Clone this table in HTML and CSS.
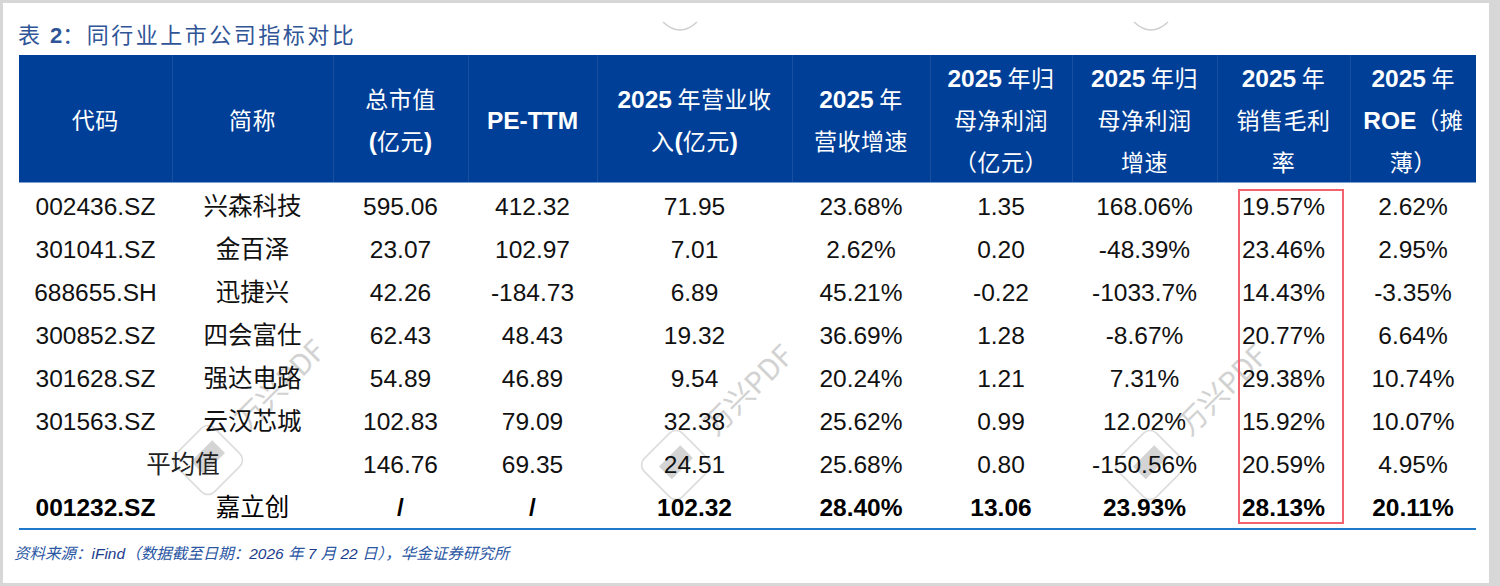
FILE: index.html
```html
<!DOCTYPE html>
<html lang="zh-CN">
<head>
<meta charset="utf-8">
<title>表 2：同行业上市公司指标对比</title>
<link rel="stylesheet" href="styles.css">
</head>
<body>
<div class="page">
  <svg class="wm" width="1486" height="580" viewBox="0 0 1486 580" aria-hidden="true">
    <path d="M660 19 Q677 35 694 19" class="arc"/>
    <path d="M1131 19 Q1148 35 1165 19" class="arc"/>
    <g transform="translate(205 457)">
      <rect x="-27" y="-27" width="54" height="54" rx="9" transform="rotate(45)" class="dia"/>
      <rect x="-9" y="-15" width="18" height="30" transform="rotate(45) translate(-2 -2)" class="blk"/>
      <text x="40" y="-28" transform="rotate(-45 40 -28)" class="wmt">万兴PDF</text>
    </g>
    <g transform="translate(673 462)">
      <rect x="-27" y="-27" width="54" height="54" rx="9" transform="rotate(45)" class="dia"/>
      <rect x="-9" y="-15" width="18" height="30" transform="rotate(45) translate(-2 -2)" class="blk"/>
      <text x="40" y="-28" transform="rotate(-45 40 -28)" class="wmt">万兴PDF</text>
    </g>
    <g transform="translate(1147 462)">
      <rect x="-27" y="-27" width="54" height="54" rx="9" transform="rotate(45)" class="dia"/>
      <rect x="-9" y="-15" width="18" height="30" transform="rotate(45) translate(-2 -2)" class="blk"/>
      <text x="40" y="-28" transform="rotate(-45 40 -28)" class="wmt">万兴PDF</text>
    </g>
  </svg>

  <h1 class="title">表 <span class="tnum">2</span>：同行业上市公司指标对比</h1>

  <div class="wrap">
    <table class="grid">
      <colgroup>
        <col style="width:153px"><col style="width:161px"><col style="width:135px"><col style="width:129px"><col style="width:195px">
        <col style="width:138px"><col style="width:142px"><col style="width:145px"><col style="width:133px"><col style="width:126px">
      </colgroup>
      <thead>
        <tr>
          <th>代码</th>
          <th>简称</th>
          <th>总市值<br><b>(</b>亿元<b>)</b></th>
          <th><b>PE-TTM</b></th>
          <th><b>2025</b> 年营业收<br>入<b>(</b>亿元<b>)</b></th>
          <th><b>2025</b> 年<br>营收增速</th>
          <th><b>2025</b> 年归<br>母净利润<br>（亿元）</th>
          <th><b>2025</b> 年归<br>母净利润<br>增速</th>
          <th><b>2025</b> 年<br>销售毛利<br>率</th>
          <th><b>2025</b> 年<br><b>ROE</b>（摊<br>薄）</th>
        </tr>
      </thead>
      <tbody>
        <tr><td>002436.SZ</td><td>兴森科技</td><td>595.06</td><td>412.32</td><td>71.95</td><td>23.68%</td><td>1.35</td><td>168.06%</td><td>19.57%</td><td>2.62%</td></tr>
        <tr><td>301041.SZ</td><td>金百泽</td><td>23.07</td><td>102.97</td><td>7.01</td><td>2.62%</td><td>0.20</td><td>-48.39%</td><td>23.46%</td><td>2.95%</td></tr>
        <tr><td>688655.SH</td><td>迅捷兴</td><td>42.26</td><td>-184.73</td><td>6.89</td><td>45.21%</td><td>-0.22</td><td>-1033.7%</td><td>14.43%</td><td>-3.35%</td></tr>
        <tr><td>300852.SZ</td><td>四会富仕</td><td>62.43</td><td>48.43</td><td>19.32</td><td>36.69%</td><td>1.28</td><td>-8.67%</td><td>20.77%</td><td>6.64%</td></tr>
        <tr><td>301628.SZ</td><td>强达电路</td><td>54.89</td><td>46.89</td><td>9.54</td><td>20.24%</td><td>1.21</td><td>7.31%</td><td>29.38%</td><td>10.74%</td></tr>
        <tr><td>301563.SZ</td><td>云汉芯城</td><td>102.83</td><td>79.09</td><td>32.38</td><td>25.62%</td><td>0.99</td><td>12.02%</td><td>15.92%</td><td>10.07%</td></tr>
        <tr><td colspan="2" class="avg">平均值</td><td>146.76</td><td>69.35</td><td>24.51</td><td>25.68%</td><td>0.80</td><td>-150.56%</td><td>20.59%</td><td>4.95%</td></tr>
        <tr class="self"><td>001232.SZ</td><td class="cn">嘉立创</td><td>/</td><td>/</td><td>102.32</td><td>28.40%</td><td>13.06</td><td>23.93%</td><td>28.13%</td><td>20.11%</td></tr>
      </tbody>
    </table>
    <div class="mark"></div>
  </div>

  <p class="note">资料来源：<span class="dk">iFind</span>（数据截至日期：<span class="dk">2026</span> 年 <span class="dk">7</span> 月 <span class="dk">22</span> 日），华金证券研究所</p>
</div>
</body>
</html>
```
FILE: styles.css
```css
html, body {
  margin: 0;
  padding: 0;
}
body {
  background: #d7d7d7;
  width: 1500px;
  height: 586px;
  overflow: hidden;
}
.page {
  position: relative;
  margin: 3px 11px 0 3px;
  height: 580px;
  background: #fff;
  overflow: hidden;
}
.wm {
  position: absolute;
  left: 0;
  top: 0;
}
.wm .arc {
  fill: none;
  stroke: #cfcfcf;
  stroke-width: 1.5;
}
.wm .dia {
  fill: none;
  stroke: #dcdcdc;
  stroke-width: 1.6;
}
.wm .blk {
  fill: #d4d4d4;
}
.wm .wmt {
  font-family: "Noto Sans CJK SC", "Liberation Sans", sans-serif;
  font-size: 29px;
  fill: #d2d2d2;
}
.title {
  margin: 0 0 5px 0;
  padding: 15px 0 0 15px;
  height: 32px;
  font-family: "Noto Sans CJK SC", "Liberation Sans", sans-serif;
  font-weight: normal;
  font-size: 22px;
  line-height: 30px;
  letter-spacing: 2.5px;
  color: #2f5597;
}
.title .tnum {
  font-family: "Liberation Sans", sans-serif;
  font-weight: bold;
  letter-spacing: 0;
  line-height: 1;
}
.wrap {
  position: relative;
  margin-left: 16px;
  width: 1457px;
}
.grid {
  border-collapse: collapse;
  table-layout: fixed;
  width: 1457px;
  border-bottom: 2px solid #1f78c9;
}
.grid th {
  background: #003f98;
  color: #fff;
  height: 127px;
  padding: 0;
  border-left: 1px solid #1b4f9f;
  border-bottom: 1px solid #7f9fd0;
  font-family: "Noto Sans CJK SC", "Liberation Sans", sans-serif;
  font-weight: normal;
  font-size: 23px;
  line-height: 42px;
  letter-spacing: 0.5px;
  text-align: center;
  vertical-align: middle;
}
.grid th:first-child {
  border-left: none;
}
.grid th b {
  font-family: "Liberation Sans", sans-serif;
  font-weight: bold;
  font-size: 24.5px;
  line-height: 1;
  letter-spacing: 0;
}
.grid td {
  height: 39px;
  padding: 4px 0 0 0;
  font-family: "Liberation Sans", "Noto Sans CJK SC", sans-serif;
  font-size: 24.5px;
  line-height: 39px;
  color: #111;
  text-align: center;
  vertical-align: top;
  white-space: nowrap;
}
.grid tr.self td {
  height: 40px;
  font-weight: bold;
  color: #000;
}
.grid td.avg {
  padding-left: 14px;
  color: #222;
}
.grid tr.self td.cn {
  font-weight: normal;
}
.mark {
  position: absolute;
  left: 1219px;
  top: 134px;
  width: 106px;
  height: 335px;
  box-sizing: border-box;
  border: 2px solid #f2636d;
}
.note {
  margin: 12px 0 0 11px;
  font-family: "Liberation Sans", "Noto Sans CJK SC", sans-serif;
  font-style: italic;
  font-size: 15.5px;
  line-height: 24px;
  color: #2a56a3;
}
.note .dk {
  color: #1b3c8c;
}
```
